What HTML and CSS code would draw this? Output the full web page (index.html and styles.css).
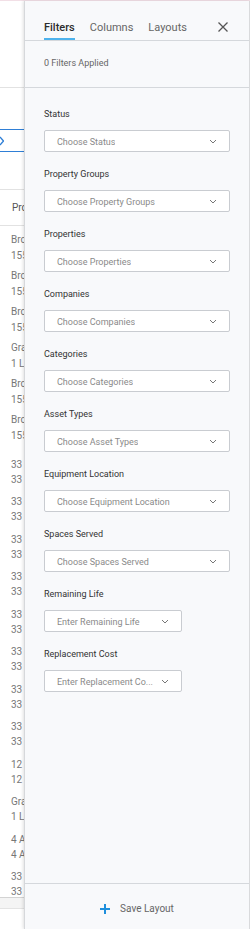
FILE: index.html
```html
<!DOCTYPE html>
<html lang="en">
<head>
    <meta charset="UTF-8">
    <meta name="viewport" content="width=device-width, initial-scale=1.0">
    <title>Equipment</title>
    <link rel="stylesheet" href="styles.css">
</head>
<body>
    <!-- page behind the drawer -->
    <div class="page">
        <div class="toolbar"></div>
        <div class="search-bar">
            <div class="search">
                <svg class="search-icon" width="9" height="10" viewBox="0 0 9 10">
                    <polyline points="5,1 8.5,5 5,9" fill="none" stroke="#2f7fd6" stroke-width="1.3"/>
                </svg>
            </div>
        </div>
        <div class="table">
            <div class="thead">Pro</div>
            <div class="row"><span>Bro</span><span>155</span></div>
            <div class="row"><span>Bro</span><span>155</span></div>
            <div class="row"><span>Bro</span><span>155</span></div>
            <div class="row"><span>Gra</span><span>1 Li</span></div>
            <div class="row"><span>Bro</span><span>155</span></div>
            <div class="row tall"><span>Bro</span><span>155</span></div>
            <div class="row wide"><span>33 A</span><span>33 A</span></div>
            <div class="row wide"><span>33 A</span><span>33 A</span></div>
            <div class="row wide"><span>33 A</span><span>33 A</span></div>
            <div class="row wide"><span>33 A</span><span>33 A</span></div>
            <div class="row wide"><span>33 A</span><span>33 A</span></div>
            <div class="row wide"><span>33 A</span><span>33 A</span></div>
            <div class="row wide"><span>33 A</span><span>33 A</span></div>
            <div class="row wide"><span>33 A</span><span>33 A</span></div>
            <div class="row wide"><span>12</span><span>12</span></div>
            <div class="row wide"><span>Gra</span><span>1 Li</span></div>
            <div class="row wide"><span>4 At</span><span>4 At</span></div>
            <div class="row wide"><span>33 A</span><span>33 A</span></div>
        </div>
        <div class="hscroll"></div>
    </div>

    <!-- filter drawer -->
    <aside class="drawer">
        <div class="drawer-header">
            <div class="tabs">
                <span class="tab active">Filters</span>
                <span class="tab">Columns</span>
                <span class="tab">Layouts</span>
            </div>
            <svg class="close" width="12" height="12" viewBox="0 0 12 12">
                <path d="M1.5 1.5 L10.5 10.5 M10.5 1.5 L1.5 10.5" stroke="#555" stroke-width="1.3" fill="none"/>
            </svg>
        </div>
        <div class="applied">0 Filters Applied</div>

        <div class="drawer-body">
            <div class="field">
                <div class="label">Status</div>
                <div class="select"><span>Choose Status</span><svg class="chev" width="8" height="5" viewBox="0 0 8 5"><polyline points="1,1 4,4 7,1"/></svg></div>
            </div>
            <div class="field">
                <div class="label">Property Groups</div>
                <div class="select"><span>Choose Property Groups</span><svg class="chev" width="8" height="5" viewBox="0 0 8 5"><polyline points="1,1 4,4 7,1"/></svg></div>
            </div>
            <div class="field">
                <div class="label">Properties</div>
                <div class="select"><span>Choose Properties</span><svg class="chev" width="8" height="5" viewBox="0 0 8 5"><polyline points="1,1 4,4 7,1"/></svg></div>
            </div>
            <div class="field">
                <div class="label">Companies</div>
                <div class="select"><span>Choose Companies</span><svg class="chev" width="8" height="5" viewBox="0 0 8 5"><polyline points="1,1 4,4 7,1"/></svg></div>
            </div>
            <div class="field">
                <div class="label">Categories</div>
                <div class="select"><span>Choose Categories</span><svg class="chev" width="8" height="5" viewBox="0 0 8 5"><polyline points="1,1 4,4 7,1"/></svg></div>
            </div>
            <div class="field">
                <div class="label">Asset Types</div>
                <div class="select"><span>Choose Asset Types</span><svg class="chev" width="8" height="5" viewBox="0 0 8 5"><polyline points="1,1 4,4 7,1"/></svg></div>
            </div>
            <div class="field">
                <div class="label">Equipment Location</div>
                <div class="select"><span>Choose Equipment Location</span><svg class="chev" width="8" height="5" viewBox="0 0 8 5"><polyline points="1,1 4,4 7,1"/></svg></div>
            </div>
            <div class="field">
                <div class="label">Spaces Served</div>
                <div class="select"><span>Choose Spaces Served</span><svg class="chev" width="8" height="5" viewBox="0 0 8 5"><polyline points="1,1 4,4 7,1"/></svg></div>
            </div>
            <div class="field">
                <div class="label">Remaining Life</div>
                <div class="select short"><span>Enter Remaining Life</span><svg class="chev" width="8" height="5" viewBox="0 0 8 5"><polyline points="1,1 4,4 7,1"/></svg></div>
            </div>
            <div class="field">
                <div class="label">Replacement Cost</div>
                <div class="select short"><span>Enter Replacement Co...</span><svg class="chev" width="8" height="5" viewBox="0 0 8 5"><polyline points="1,1 4,4 7,1"/></svg></div>
            </div>
        </div>

        <div class="drawer-footer">
            <svg class="plus" width="10" height="10" viewBox="0 0 10 10">
                <path d="M5 0 V10 M0 5 H10" stroke="#1f8fdc" stroke-width="2" fill="none"/>
            </svg>
            <span>Save Layout</span>
        </div>
    </aside>
</body>
</html>
```

FILE: styles.css
```css
* {
    box-sizing: border-box;
}

body {
    margin: 0;
    height: 929px;
    overflow: hidden;
    font-family: Roboto, "Liberation Sans", sans-serif;
    background-color: #fff;
}

/* page behind */
.page {
    position: relative;
    height: 929px;
    border-top: 1px solid #f2dfe6;
}

.toolbar {
    height: 87px;
    border-bottom: 1px solid #e2e2e2;
}

.search-bar {
    height: 102px;
    padding-top: 41px;
    border-bottom: 1px solid #e2e2e2;
}

.search {
    width: 260px;
    height: 23px;
    margin-left: -20px;
    padding-left: 14px;
    border: 1px solid #2f7fd6;
    border-radius: 3px;
    display: flex;
    align-items: center;
}

.table {
    width: 24px;
    height: 707px;
    overflow: hidden;
}

.thead {
    height: 36px;
    padding-left: 12px;
    line-height: 35px;
    font-size: 10px;
    color: #555;
    border-bottom: 1px solid #e2e2e2;
    white-space: nowrap;
    width: 250px;
}

.row {
    display: flex;
    flex-direction: column;
    height: 36px;
    padding: 6px 0 0 11px;
    font-size: 10px;
    line-height: 16px;
    color: #777;
    white-space: nowrap;
}

.row.tall {
    height: 43.5px;
}

.row.wide {
    height: 37.5px;
    padding-top: 7px;
    line-height: 15px;
}

.hscroll {
    height: 12px;
    background-color: #f4f4f4;
    border-top: 1px solid #d3d3d3;
    border-bottom: 1px solid #e3e3e3;
}

/* drawer */
.drawer {
    position: absolute;
    top: 1px;
    left: 24px;
    right: 0;
    bottom: 0;
    display: flex;
    flex-direction: column;
    background-color: #f8f9fb;
    border-left: 1px solid #d6d8db;
    border-right: 1px solid #d9dadc;
    box-shadow: -1px 0 3px rgba(0, 0, 0, 0.12);
}

.drawer-header {
    display: flex;
    align-items: flex-end;
    height: 40px;
    padding: 0 19px;
    border-bottom: 1px solid #d5d8dc;
}

.tabs {
    display: flex;
    gap: 15px;
}

.tab {
    font-size: 11px;
    line-height: 14px;
    color: #666;
    padding-bottom: 3px;
    border-bottom: 2px solid transparent;
}

.tab.active {
    color: #2d2d2d;
    font-weight: 500;
    border-bottom-color: #4db2ec;
}

.close {
    margin-left: auto;
    margin-right: 1px;
    margin-bottom: 7px;
}

.applied {
    height: 47px;
    padding: 16px 19px 0;
    font-size: 9px;
    line-height: 12px;
    color: #666;
    border-bottom: 1px solid #d5d8dc;
}

.drawer-body {
    flex: 1;
    padding: 20px 19px 0;
}

.field {
    margin-bottom: 16px;
}

.label {
    font-size: 9px;
    line-height: 12px;
    color: #333;
    margin-bottom: 10px;
}

.select {
    display: flex;
    align-items: center;
    justify-content: space-between;
    height: 22px;
    padding: 0 12px;
    background-color: #fff;
    border: 1px solid #c9ccd1;
    border-radius: 2px;
    font-size: 9px;
    color: #8a8a8a;
}

.select span {
    overflow: hidden;
    white-space: nowrap;
    padding-top: 1px;
}

.select.short {
    width: 138px;
}

.chev {
    flex-shrink: 0;
    margin-left: 8px;
}

.chev polyline {
    fill: none;
    stroke: #777;
    stroke-width: 1;
}

.drawer-footer {
    display: flex;
    justify-content: center;
    align-items: flex-start;
    gap: 10px;
    height: 46px;
    padding-top: 18px;
    border-top: 1px solid #d5d8dc;
    font-size: 10px;
    line-height: 14px;
    color: #666;
}

.plus {
    margin-top: 2px;
}
```
